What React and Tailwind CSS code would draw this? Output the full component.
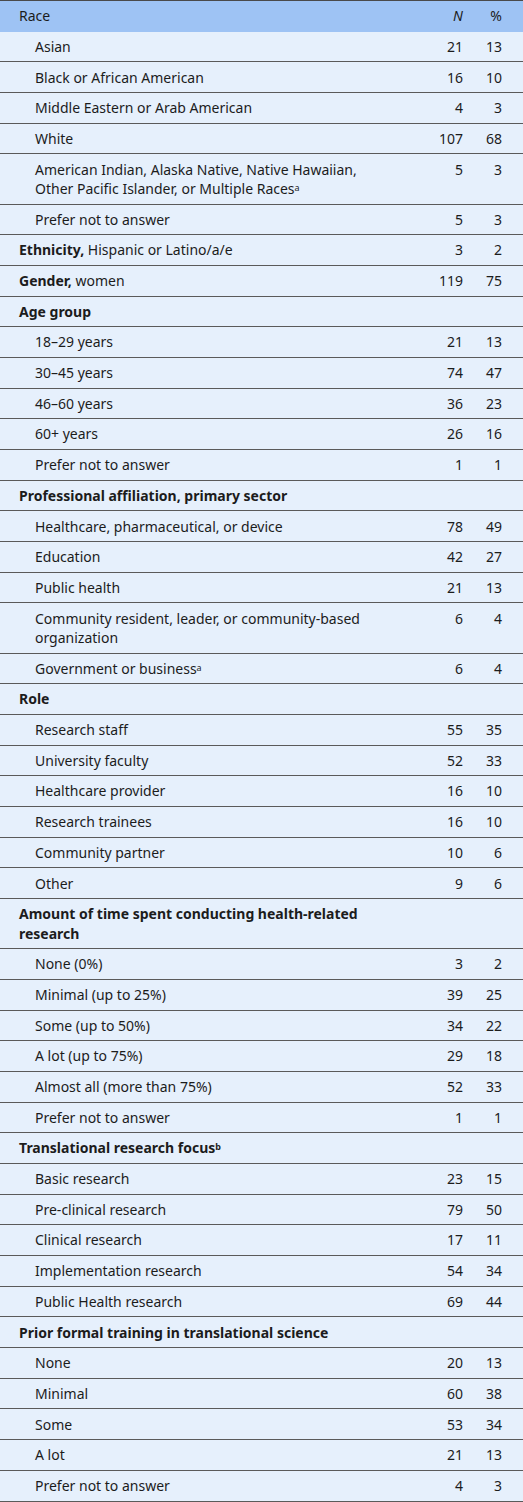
import React from 'react';

const rows = [
  { label: 'Asian', n: 21, p: 13, indent: true },
  { label: 'Black or African American', n: 16, p: 10, indent: true },
  { label: 'Middle Eastern or Arab American', n: 4, p: 3, indent: true },
  { label: 'White', n: 107, p: 68, indent: true },
  { label: ['American Indian, Alaska Native, Native Hawaiian,', 'Other Pacific Islander, or Multiple Races'], sup: 'a', n: 5, p: 3, indent: true },
  { label: 'Prefer not to answer', n: 5, p: 3, indent: true },
  { bold: 'Ethnicity,', label: ' Hispanic or Latino/a/e', n: 3, p: 2 },
  { bold: 'Gender,', label: ' women', n: 119, p: 75 },
  { bold: 'Age group' },
  { label: '18–29 years', n: 21, p: 13, indent: true },
  { label: '30–45 years', n: 74, p: 47, indent: true },
  { label: '46–60 years', n: 36, p: 23, indent: true },
  { label: '60+ years', n: 26, p: 16, indent: true },
  { label: 'Prefer not to answer', n: 1, p: 1, indent: true },
  { bold: 'Professional affiliation, primary sector' },
  { label: 'Healthcare, pharmaceutical, or device', n: 78, p: 49, indent: true },
  { label: 'Education', n: 42, p: 27, indent: true },
  { label: 'Public health', n: 21, p: 13, indent: true },
  { label: ['Community resident, leader, or community-based', 'organization'], n: 6, p: 4, indent: true },
  { label: 'Government or business', sup: 'a', n: 6, p: 4, indent: true },
  { bold: 'Role' },
  { label: 'Research staff', n: 55, p: 35, indent: true },
  { label: 'University faculty', n: 52, p: 33, indent: true },
  { label: 'Healthcare provider', n: 16, p: 10, indent: true },
  { label: 'Research trainees', n: 16, p: 10, indent: true },
  { label: 'Community partner', n: 10, p: 6, indent: true },
  { label: 'Other', n: 9, p: 6, indent: true },
  { bold: ['Amount of time spent conducting health-related', 'research'] },
  { label: 'None (0%)', n: 3, p: 2, indent: true },
  { label: 'Minimal (up to 25%)', n: 39, p: 25, indent: true },
  { label: 'Some (up to 50%)', n: 34, p: 22, indent: true },
  { label: 'A lot (up to 75%)', n: 29, p: 18, indent: true },
  { label: 'Almost all (more than 75%)', n: 52, p: 33, indent: true },
  { label: 'Prefer not to answer', n: 1, p: 1, indent: true },
  { bold: 'Translational research focus', boldSup: 'b' },
  { label: 'Basic research', n: 23, p: 15, indent: true },
  { label: 'Pre-clinical research', n: 79, p: 50, indent: true },
  { label: 'Clinical research', n: 17, p: 11, indent: true },
  { label: 'Implementation research', n: 54, p: 34, indent: true },
  { label: 'Public Health research', n: 69, p: 44, indent: true },
  { bold: 'Prior formal training in translational science' },
  { label: 'None', n: 20, p: 13, indent: true },
  { label: 'Minimal', n: 60, p: 38, indent: true },
  { label: 'Some', n: 53, p: 34, indent: true },
  { label: 'A lot', n: 21, p: 13, indent: true },
  { label: 'Prefer not to answer', n: 4, p: 3, indent: true },
];

const Sup = ({ children }) => <sup className="text-[9px] leading-none -top-[3px]">{children}</sup>;

// wrapped labels are split into explicit lines
const Lines = ({ text }) =>
  Array.isArray(text) ? text.map((t, i) => <div key={i}>{t}</div>) : text;

const Row = ({ row }) => {
  const multi = Array.isArray(row.label) || Array.isArray(row.bold);
  return (
    <div className="flex border-b border-[#5a5a5a] py-[5.15px] pr-[21px] leading-[19.4px]">
      <div className={`flex-1 pr-[8px] whitespace-pre-wrap ${row.indent ? 'pl-[35px]' : 'pl-[19px]'}`}>
        {multi ? (
          <>
            {Array.isArray(row.label) && (
              <>
                <div>{row.label[0]}</div>
                <div>
                  {row.label[1]}
                  {row.sup && <Sup>{row.sup}</Sup>}
                </div>
              </>
            )}
            {Array.isArray(row.bold) && (
              <b className="font-bold">
                <Lines text={row.bold} />
              </b>
            )}
          </>
        ) : (
          <>
            {row.bold && <b className="font-bold">{row.bold}</b>}
            {row.boldSup && <b className="font-bold"><Sup>{row.boldSup}</Sup></b>}
            {row.label}
            {row.sup && <Sup>{row.sup}</Sup>}
          </>
        )}
      </div>
      <div className="w-[62px] text-right">{row.n}</div>
      <div className="w-[39px] text-right">{row.p}</div>
    </div>
  );
};

export default function App() {
  return (
    <div
      className="w-[523px] bg-[#e6f0fc] text-[14px] text-[#1c1c1c] border-t border-[#4a4a4a]"
      style={{ fontFamily: '"Noto Sans", "Open Sans", sans-serif' }}
    >
      <div className="flex bg-[#9ec3f4] py-[5.15px] pr-[21px] leading-[19.4px] border-b border-[#9ec3f4]">
        <div className="flex-1 pl-[19px]">Race</div>
        <div className="w-[62px] text-right italic">N</div>
        <div className="w-[39px] text-right">%</div>
      </div>
      {rows.map((row, i) => (
        <Row key={i} row={row} />
      ))}
    </div>
  );
}
